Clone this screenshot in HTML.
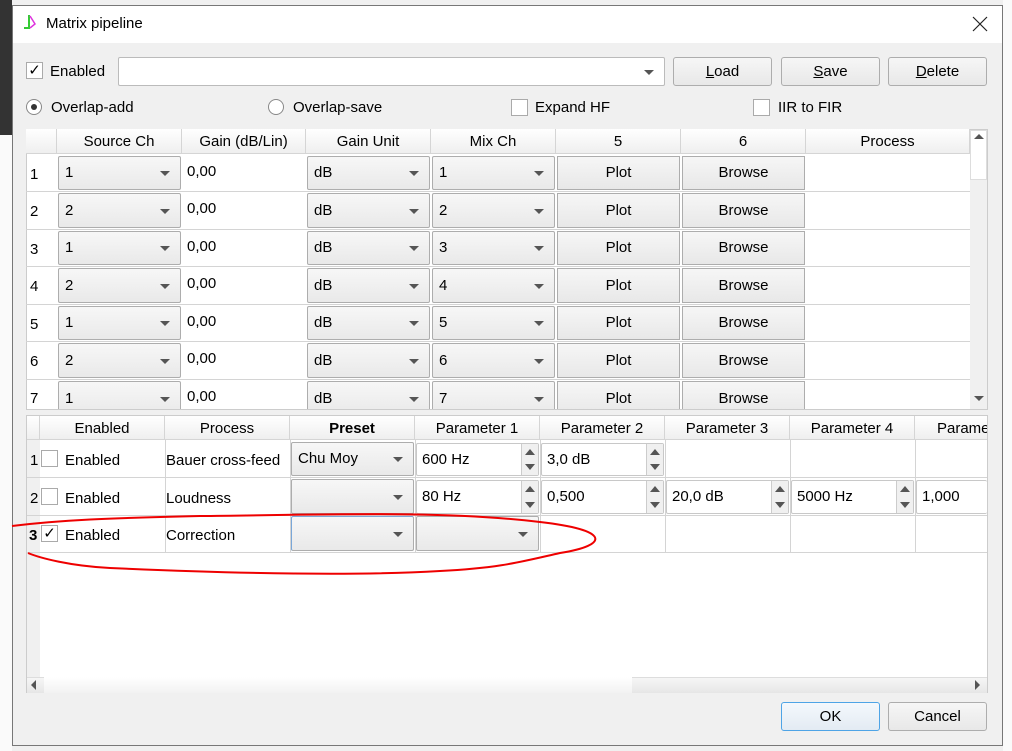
<!DOCTYPE html>
<html><head><meta charset="utf-8"><style>
*{box-sizing:border-box;margin:0;padding:0}
body{width:1012px;height:751px;position:relative;overflow:hidden;background:#f0f0f0;font-family:"Liberation Sans",sans-serif;font-size:15px;color:#000}
.a{position:absolute}
.dlg{left:12px;top:5px;width:991px;height:741px;background:#f0f0f0;border:1px solid #777;}
.btn{position:absolute;border:1px solid #adadad;border-radius:3px;background:linear-gradient(#f6f6f6,#e8e8e8);text-align:center;font-size:15px}
.cb{position:absolute;border:1px solid #adadad;border-radius:2px;background:linear-gradient(#f7f7f7,#e9e9e9);font-size:15px;padding-left:6px}
.cb:after{content:"";position:absolute;right:10px;top:50%;margin-top:-2px;border-left:5px solid transparent;border-right:5px solid transparent;border-top:5px solid #555}
.ed{position:absolute;background:#fff;border:1px solid #ccc;font-size:15px;padding-left:4px}
.sp{position:absolute;background:#fff;border:1px solid #c8c8c8;border-radius:2px;font-size:15px;padding-left:5px}
.sp i{position:absolute;right:0;top:0;bottom:0;width:17px;border-left:1px solid #ccc;background:#f0f0f0}
.sp i:before{content:"";position:absolute;left:3px;top:5px;border-left:5px solid transparent;border-right:5px solid transparent;border-bottom:6px solid #555}
.sp i:after{content:"";position:absolute;left:3px;bottom:5px;border-left:5px solid transparent;border-right:5px solid transparent;border-top:6px solid #555}
.hd{position:absolute;background:linear-gradient(#fff,#efefef);border-right:1px solid #d5d5d5;border-bottom:1px solid #d5d5d5;text-align:center;font-size:15px;line-height:25px}
.rn{position:absolute;font-size:15px}
.chk{position:absolute;width:17px;height:17px;border:1px solid #aaa;background:#fff;font-size:15px;line-height:15px;text-align:center}
.vl{position:absolute;width:1px;background:#d4d4d4}
.hl{position:absolute;height:1px;background:#d4d4d4}
</style></head><body>
<div class="a" style="left:0;top:0;width:12px;height:135px;background:#333"></div>
<div class="a" style="left:0;top:135px;width:12px;height:616px;background:#fafafa"></div>
<div class="a" style="left:1003px;top:0;width:9px;height:751px;background:#fafafa"></div>

<div class="a dlg"></div>
<div class="a" style="left:13px;top:6px;width:989px;height:37px;background:#fff"></div>
<div class="a" style="left:22px;top:14px;width:14px;height:16px">
<svg width="16" height="18"><path d="M7 1 L7 14 L2 14" stroke="#3c3" stroke-width="2" fill="none"/><path d="M8 2 L13 10 L8 14" stroke="#d3d" stroke-width="1.5" fill="none"/></svg></div>
<div class="a" style="left:46px;top:15px;font-size:15px">Matrix pipeline</div>
<svg class="a" style="left:972px;top:16px" width="16" height="16"><path d="M1 1 L15 15 M15 1 L1 15" stroke="#222" stroke-width="1.2"/></svg>

<div class="chk" style="left:26px;top:62px;line-height:15px">✓</div>
<div class="a" style="left:50px;top:63px">Enabled</div>
<div class="cb" style="left:118px;top:57px;width:547px;height:29px;background:#fff;border-color:#bbb"></div>
<div class="btn" style="left:673px;top:57px;width:99px;height:29px;line-height:27px"><u>L</u>oad</div>
<div class="btn" style="left:781px;top:57px;width:99px;height:29px;line-height:27px"><u>S</u>ave</div>
<div class="btn" style="left:888px;top:57px;width:99px;height:29px;line-height:27px"><u>D</u>elete</div>

<div class="a" style="left:26px;top:99px;width:16px;height:16px;border:1px solid #888;border-radius:50%;background:#fff"><div class="a" style="left:4px;top:4px;width:6px;height:6px;border-radius:50%;background:#333"></div></div>
<div class="a" style="left:51px;top:99px">Overlap-add</div>
<div class="a" style="left:268px;top:99px;width:16px;height:16px;border:1px solid #888;border-radius:50%;background:#fff"></div>
<div class="a" style="left:293px;top:99px">Overlap-save</div>
<div class="chk" style="left:511px;top:99px"></div>
<div class="a" style="left:535px;top:99px">Expand HF</div>
<div class="chk" style="left:753px;top:99px"></div>
<div class="a" style="left:778px;top:99px">IIR to FIR</div>

<div class="a" style="left:26px;top:129px;width:962px;height:281px;background:#fff;border:1px solid #ccc"></div>
<div class="hd" style="left:26px;top:129px;width:31px;height:25px"></div>
<div class="hd" style="left:57px;top:129px;width:125px;height:25px">Source Ch</div>
<div class="hd" style="left:182px;top:129px;width:124px;height:25px">Gain (dB/Lin)</div>
<div class="hd" style="left:306px;top:129px;width:125px;height:25px">Gain Unit</div>
<div class="hd" style="left:431px;top:129px;width:125px;height:25px">Mix Ch</div>
<div class="hd" style="left:556px;top:129px;width:125px;height:25px">5</div>
<div class="hd" style="left:681px;top:129px;width:125px;height:25px">6</div>
<div class="hd" style="left:806px;top:129px;width:164px;height:25px">Process</div>
<div class="a" style="left:970px;top:130px;width:17px;height:279px;background:#f0f0f0"></div>
<div class="a" style="left:970px;top:130px;width:17px;height:50px;background:#fff;border:1px solid #ddd"></div>
<div class="a" style="left:974px;top:134px;border-left:5px solid transparent;border-right:5px solid transparent;border-bottom:5px solid #555"></div>
<div class="a" style="left:974px;top:396px;border-left:5px solid transparent;border-right:5px solid transparent;border-top:5px solid #555"></div>

<div class="hl" style="left:26px;top:191px;width:944px"></div>
<div class="hl" style="left:26px;top:229px;width:944px"></div>
<div class="hl" style="left:26px;top:266px;width:944px"></div>
<div class="hl" style="left:26px;top:304px;width:944px"></div>
<div class="hl" style="left:26px;top:341px;width:944px"></div>
<div class="hl" style="left:26px;top:379px;width:944px"></div>

<div class="rn" style="left:30px;top:166px">1</div><div class="cb" style="left:58px;top:156px;width:123px;height:34px;line-height:32px">1</div><div class="ed" style="left:183px;top:155px;width:122px;height:34px;line-height:34px;border:none">0,00</div><div class="cb" style="left:307px;top:156px;width:123px;height:34px;line-height:32px">dB</div><div class="cb" style="left:432px;top:156px;width:123px;height:34px;line-height:32px">1</div><div class="btn" style="left:557px;top:156px;width:123px;height:34px;line-height:32px;border-radius:0">Plot</div><div class="btn" style="left:682px;top:156px;width:123px;height:34px;line-height:32px;border-radius:0">Browse</div>
<div class="rn" style="left:30px;top:203px">2</div><div class="cb" style="left:58px;top:193px;width:123px;height:35px;line-height:33px">2</div><div class="ed" style="left:183px;top:192px;width:122px;height:34px;line-height:34px;border:none">0,00</div><div class="cb" style="left:307px;top:193px;width:123px;height:35px;line-height:33px">dB</div><div class="cb" style="left:432px;top:193px;width:123px;height:35px;line-height:33px">2</div><div class="btn" style="left:557px;top:193px;width:123px;height:35px;line-height:33px;border-radius:0">Plot</div><div class="btn" style="left:682px;top:193px;width:123px;height:35px;line-height:33px;border-radius:0">Browse</div>
<div class="rn" style="left:30px;top:241px">3</div><div class="cb" style="left:58px;top:231px;width:123px;height:34px;line-height:32px">1</div><div class="ed" style="left:183px;top:230px;width:122px;height:34px;line-height:34px;border:none">0,00</div><div class="cb" style="left:307px;top:231px;width:123px;height:34px;line-height:32px">dB</div><div class="cb" style="left:432px;top:231px;width:123px;height:34px;line-height:32px">3</div><div class="btn" style="left:557px;top:231px;width:123px;height:34px;line-height:32px;border-radius:0">Plot</div><div class="btn" style="left:682px;top:231px;width:123px;height:34px;line-height:32px;border-radius:0">Browse</div>
<div class="rn" style="left:30px;top:278px">4</div><div class="cb" style="left:58px;top:268px;width:123px;height:35px;line-height:33px">2</div><div class="ed" style="left:183px;top:267px;width:122px;height:34px;line-height:34px;border:none">0,00</div><div class="cb" style="left:307px;top:268px;width:123px;height:35px;line-height:33px">dB</div><div class="cb" style="left:432px;top:268px;width:123px;height:35px;line-height:33px">4</div><div class="btn" style="left:557px;top:268px;width:123px;height:35px;line-height:33px;border-radius:0">Plot</div><div class="btn" style="left:682px;top:268px;width:123px;height:35px;line-height:33px;border-radius:0">Browse</div>
<div class="rn" style="left:30px;top:316px">5</div><div class="cb" style="left:58px;top:306px;width:123px;height:34px;line-height:32px">1</div><div class="ed" style="left:183px;top:305px;width:122px;height:34px;line-height:34px;border:none">0,00</div><div class="cb" style="left:307px;top:306px;width:123px;height:34px;line-height:32px">dB</div><div class="cb" style="left:432px;top:306px;width:123px;height:34px;line-height:32px">5</div><div class="btn" style="left:557px;top:306px;width:123px;height:34px;line-height:32px;border-radius:0">Plot</div><div class="btn" style="left:682px;top:306px;width:123px;height:34px;line-height:32px;border-radius:0">Browse</div>
<div class="rn" style="left:30px;top:353px">6</div><div class="cb" style="left:58px;top:343px;width:123px;height:35px;line-height:33px">2</div><div class="ed" style="left:183px;top:342px;width:122px;height:34px;line-height:34px;border:none">0,00</div><div class="cb" style="left:307px;top:343px;width:123px;height:35px;line-height:33px">dB</div><div class="cb" style="left:432px;top:343px;width:123px;height:35px;line-height:33px">6</div><div class="btn" style="left:557px;top:343px;width:123px;height:35px;line-height:33px;border-radius:0">Plot</div><div class="btn" style="left:682px;top:343px;width:123px;height:35px;line-height:33px;border-radius:0">Browse</div>
<div class="a" style="left:27px;top:380px;width:943px;height:29px;overflow:hidden">
<div class="rn" style="left:3px;top:10px">7</div><div class="cb" style="left:31px;top:1px;width:123px;height:35px;line-height:33px">1</div><div class="ed" style="left:156px;top:0;width:122px;height:34px;line-height:34px;border:none">0,00</div><div class="cb" style="left:280px;top:1px;width:123px;height:35px;line-height:33px">dB</div><div class="cb" style="left:405px;top:1px;width:123px;height:35px;line-height:33px">7</div><div class="btn" style="left:530px;top:1px;width:123px;height:35px;line-height:33px;border-radius:0">Plot</div><div class="btn" style="left:655px;top:1px;width:123px;height:35px;line-height:33px;border-radius:0">Browse</div>
</div>

<div class="a" style="left:26px;top:415px;width:962px;height:278px;background:#fff;border:1px solid #ccc"></div>
<div class="a" style="left:27px;top:416px;width:13px;height:261px;background:#f0f0f0"></div>
<div class="hd" style="left:27px;top:416px;width:13px;height:24px"></div>
<div class="hd" style="left:40px;top:416px;width:125px;height:24px">Enabled</div>
<div class="hd" style="left:165px;top:416px;width:125px;height:24px">Process</div>
<div class="hd" style="left:290px;top:416px;width:125px;height:24px;font-weight:bold">Preset</div>
<div class="hd" style="left:415px;top:416px;width:125px;height:24px">Parameter 1</div>
<div class="hd" style="left:540px;top:416px;width:125px;height:24px">Parameter 2</div>
<div class="hd" style="left:665px;top:416px;width:125px;height:24px">Parameter 3</div>
<div class="hd" style="left:790px;top:416px;width:125px;height:24px">Parameter 4</div>
<div class="hd" style="left:915px;top:416px;width:72px;height:24px;overflow:hidden;text-align:left;padding-left:22px;border-right:none;white-space:nowrap">Parameter 5</div>
<div class="hl" style="left:27px;top:477px;width:960px"></div>
<div class="hl" style="left:27px;top:515px;width:960px"></div>
<div class="hl" style="left:27px;top:552px;width:960px"></div>
<div class="vl" style="left:165px;top:440px;height:112px"></div>
<div class="vl" style="left:290px;top:440px;height:112px"></div>
<div class="vl" style="left:415px;top:440px;height:112px"></div>
<div class="vl" style="left:540px;top:440px;height:112px"></div>
<div class="vl" style="left:665px;top:440px;height:112px"></div>
<div class="vl" style="left:790px;top:440px;height:112px"></div>
<div class="vl" style="left:915px;top:440px;height:112px"></div>

<div class="rn" style="left:30px;top:452px">1</div><div class="chk" style="left:41px;top:450px"></div><div class="a" style="left:65px;top:452px">Enabled</div><div class="a" style="left:166px;top:452px">Bauer cross-feed</div>
<div class="cb" style="left:291px;top:442px;width:123px;height:34px;line-height:32px">Chu Moy</div>
<div class="sp" style="left:416px;top:443px;width:123px;height:33px;line-height:31px">600 Hz<i></i></div>
<div class="sp" style="left:541px;top:443px;width:123px;height:33px;line-height:31px">3,0 dB<i></i></div>

<div class="rn" style="left:30px;top:490px">2</div><div class="chk" style="left:41px;top:488px"></div><div class="a" style="left:65px;top:490px">Enabled</div><div class="a" style="left:166px;top:490px">Loudness</div>
<div class="cb" style="left:291px;top:479px;width:123px;height:35px"></div>
<div class="sp" style="left:416px;top:480px;width:123px;height:34px;line-height:32px">80 Hz<i></i></div>
<div class="sp" style="left:541px;top:480px;width:123px;height:34px;line-height:32px">0,500<i></i></div>
<div class="sp" style="left:666px;top:480px;width:123px;height:34px;line-height:32px">20,0 dB<i></i></div>
<div class="sp" style="left:791px;top:480px;width:123px;height:34px;line-height:32px">5000 Hz<i></i></div>
<div class="sp" style="left:916px;top:480px;width:71px;height:34px;line-height:32px;border-right:none">1,000</div>

<div class="rn" style="left:29px;top:527px;font-weight:bold">3</div><div class="chk" style="left:41px;top:525px">✓</div><div class="a" style="left:65px;top:527px">Enabled</div><div class="a" style="left:166px;top:527px">Correction</div>
<div class="cb" style="left:291px;top:516px;width:123px;height:35px;border-color:#7aa7d8 #adadad #adadad #7aa7d8"></div>
<div class="cb" style="left:416px;top:516px;width:123px;height:35px"></div>

<div class="a" style="left:27px;top:677px;width:960px;height:16px;background:linear-gradient(#f6f6f6,#e6e6e6);border-top:1px solid #ddd"></div>
<div class="a" style="left:44px;top:677px;width:588px;height:16px;background:linear-gradient(#fff,#f2f2f2)"></div>
<div class="a" style="left:31px;top:680px;border-top:5px solid transparent;border-bottom:5px solid transparent;border-right:5px solid #555"></div>
<div class="a" style="left:975px;top:680px;border-top:5px solid transparent;border-bottom:5px solid transparent;border-left:5px solid #555"></div>

<div class="btn" style="left:781px;top:702px;width:99px;height:29px;line-height:27px;border-color:#4ea4e6;background:linear-gradient(#f4f8fc,#e3ebf3)">OK</div>
<div class="btn" style="left:888px;top:702px;width:99px;height:29px;line-height:27px">Cancel</div>

<svg class="a" style="left:0;top:0" width="1012" height="751">
<path d="M12 526 C60 520 110 518 200 516 C320 515 440 510 540 522 C610 530 610 545 560 553 C520 562 500 568 440 571 C340 577 200 572 110 568 C70 566 40 558 28 553" stroke="#e00" stroke-width="2" fill="none"/>
</svg>
</body></html>
